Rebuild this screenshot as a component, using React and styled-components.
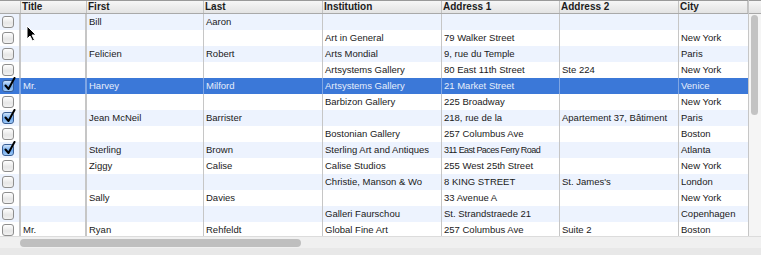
import React from "react";
import styled, { createGlobalStyle } from "styled-components";

const Global = createGlobalStyle`
  html, body { margin: 0; padding: 0; background: #e8e8e8; }
  body { font-family: "Liberation Sans", Arial, sans-serif; }
  * { box-sizing: border-box; }
`;

const COLS = [
  { key: "chk", label: "", w: 21, b: 2 },
  { key: "title", label: "Title", w: 66, b: 2 },
  { key: "first", label: "First", w: 117, b: 1 },
  { key: "last", label: "Last", w: 119, b: 1 },
  { key: "inst", label: "Institution", w: 119, b: 1 },
  { key: "a1", label: "Address 1", w: 118, b: 1 },
  { key: "a2", label: "Address 2", w: 119, b: 1 },
  { key: "city", label: "City", w: 69, b: 0 },
];

const ROWS = [
  { first: "Bill", last: "Aaron" },
  { inst: "Art in General", a1: "79 Walker Street", city: "New York" },
  { first: "Felicien", last: "Robert", inst: "Arts Mondial", a1: "9, rue du Temple", city: "Paris" },
  { inst: "Artsystems Gallery", a1: "80 East 11th Street", a2: "Ste 224", city: "New York" },
  { chk: true, sel: true, title: "Mr.", first: "Harvey", last: "Milford", inst: "Artsystems Gallery", a1: "21 Market Street", city: "Venice" },
  { inst: "Barbizon Gallery", a1: "225 Broadway", city: "New York" },
  { chk: true, first: "Jean McNeil", last: "Barrister", a1: "218, rue de la", a2: "Apartement 37, Bâtiment", city: "Paris" },
  { inst: "Bostonian Gallery", a1: "257 Columbus Ave", city: "Boston" },
  { chk: true, first: "Sterling", last: "Brown", inst: "Sterling Art and Antiques", a1: "311 East Paces Ferry Road", small: "a1", city: "Atlanta" },
  { first: "Ziggy", last: "Calise", inst: "Calise Studios", a1: "255 West 25th Street", city: "New York" },
  { inst: "Christie, Manson & Wo", a1: "8 KING STREET", a2: "St. James's", city: "London" },
  { first: "Sally", last: "Davies", a1: "33 Avenue A", city: "New York" },
  { inst: "Galleri Faurschou", a1: "St. Strandstraede 21", city: "Copenhagen" },
  { title: "Mr.", first: "Ryan", last: "Rehfeldt", inst: "Global Fine Art", a1: "257 Columbus Ave", a2: "Suite 2", city: "Boston" },
];

const Window = styled.div`
  position: relative;
  width: 761px;
  height: 255px;
  background: #e8e8e8;
  display: flex;
  flex-direction: column;
  overflow: hidden;
`;

const TableFrame = styled.div`
  display: flex;
  height: 236px;
  background: #fff;
`;

const TableMain = styled.div`
  width: 748px;
  display: flex;
  flex-direction: column;
`;

const HeaderRow = styled.div`
  display: flex;
  height: 14px;
  border-top: 1px solid #9a9a9a;
  border-bottom: 1px solid #a9a9a9;
  background: linear-gradient(#f7f7f7, #e3e3e3);
`;

const HeaderCell = styled.div`
  width: ${(p) => p.$w}px;
  flex: none;
  border-right: 1px solid #c2c2c2;
  padding-left: 1px;
  font-size: 10px;
  font-weight: bold;
  line-height: 12px;
  color: #1c1c1c;
  white-space: nowrap;
  overflow: hidden;
`;

const Body = styled.div`
  flex: 1;
  overflow: hidden;
`;

const Row = styled.div`
  display: flex;
  height: 16px;
  background: ${(p) => (p.$sel ? "#3b78d8" : p.$stripe ? "#edf3fe" : "#ffffff")};
  color: ${(p) => (p.$sel ? "#e6eefb" : "#1a1a1a")};
`;

const Cell = styled.div`
  width: ${(p) => p.$w}px;
  flex: none;
  border-right: ${(p) => p.$b}px solid ${(p) => (p.$sel ? "#7fa6e4" : "#c6c6c6")};
  padding-left: 2px;
  font-size: ${(p) => (p.$small ? "9px" : "9.5px")};
  letter-spacing: ${(p) => (p.$small ? "-0.55px" : "0")};
  line-height: 16px;
  white-space: nowrap;
  overflow: hidden;
`;

const CheckCell = styled.div`
  width: ${(p) => p.$w}px;
  flex: none;
  border-right: 2px solid ${(p) => (p.$sel ? "#7fa6e4" : "#c6c6c6")};
  display: flex;
  align-items: center;
  padding-left: 2px;
`;

const Box = styled.div`
  position: relative;
  width: 12px;
  height: 12px;
  border-radius: 3px;
  border: 1px solid ${(p) => (p.$on ? "#3a5f96" : "#8e8e8e")};
  background: ${(p) =>
    p.$on
      ? "linear-gradient(#cfe4fb, #6fa9ee 55%, #9fcaf7)"
      : "linear-gradient(#ffffff, #e6e6e6 60%, #f2f2f2)"};
`;

const Tick = styled.svg`
  position: absolute;
  left: 1px;
  top: -4px;
`;

const VScroll = styled.div`
  width: 13px;
  display: flex;
  flex-direction: column;
  border-left: 1px solid #c6c6c6;
`;

const Corner = styled.div`
  height: 14px;
  border-top: 1px solid #9a9a9a;
  border-bottom: 1px solid #a9a9a9;
  background: linear-gradient(#f7f7f7, #e3e3e3);
`;

const VTrack = styled.div`
  flex: 1;
  background: #f5f5f5;
  padding: 1px 2px 0 2px;
`;

const VThumb = styled.div`
  width: 7px;
  height: 100px;
  border-radius: 4px;
  background: #c3c3c3;
`;

const HScroll = styled.div`
  height: 12px;
  background: #f0f0f0;
  border-top: 1px solid #dcdcdc;
  display: flex;
  align-items: center;
  padding-left: 20px;
`;

const HThumb = styled.div`
  width: 281px;
  height: 8px;
  border-radius: 4px;
  background: #bfbfbf;
`;

const Cursor = styled.svg`
  position: absolute;
  left: 26px;
  top: 25px;
`;

function CheckBox({ on }) {
  return (
    <Box $on={on}>
      {on && (
        <Tick width="12" height="14" viewBox="0 0 12 14">
          <path d="M1.5 8.5 L4.5 12 L10.5 1" fill="none" stroke="#000" strokeWidth="2" strokeLinecap="round" strokeLinejoin="round" />
        </Tick>
      )}
    </Box>
  );
}

export default function App() {
  return (
    <Window>
      <Global />
      <TableFrame>
        <TableMain>
          <HeaderRow>
            {COLS.map((c) => (
              <HeaderCell key={c.key} $w={c.w}>
                {c.label}
              </HeaderCell>
            ))}
          </HeaderRow>
          <Body>
            {ROWS.map((r, i) => (
              <Row key={i} $stripe={i % 2 === 0} $sel={r.sel}>
                {COLS.map((c) =>
                  c.key === "chk" ? (
                    <CheckCell key={c.key} $w={c.w} $sel={r.sel}>
                      <CheckBox on={!!r.chk} />
                    </CheckCell>
                  ) : (
                    <Cell key={c.key} $w={c.w} $b={c.b} $sel={r.sel} $small={r.small === c.key}>
                      {r[c.key] || ""}
                    </Cell>
                  )
                )}
              </Row>
            ))}
          </Body>
        </TableMain>
        <VScroll>
          <Corner />
          <VTrack>
            <VThumb />
          </VTrack>
        </VScroll>
      </TableFrame>
      <HScroll>
        <HThumb />
      </HScroll>
      <Cursor width="12" height="17" viewBox="0 0 12 17">
        <path d="M1 1 L1 14 L4 11 L6.5 16 L8.5 15 L6 10 L10 10 Z" fill="#000" stroke="#fff" strokeWidth="1" strokeLinejoin="round" />
      </Cursor>
    </Window>
  );
}
